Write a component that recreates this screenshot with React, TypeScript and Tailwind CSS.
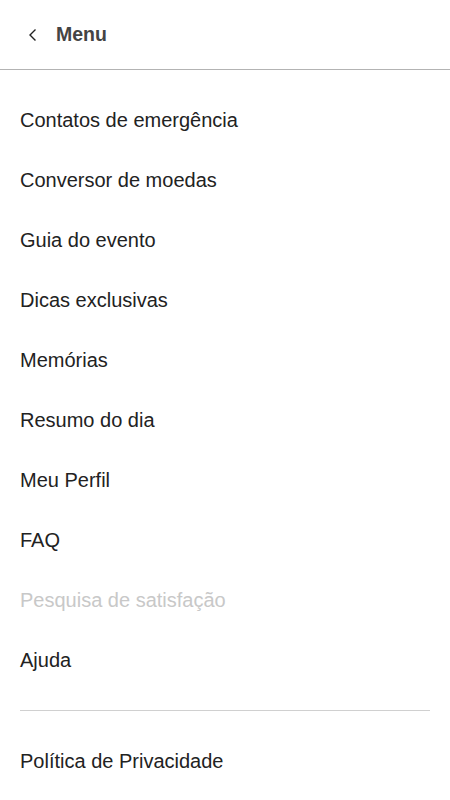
const items = [
  { label: "Contatos de emergência" },
  { label: "Conversor de moedas" },
  { label: "Guia do evento" },
  { label: "Dicas exclusivas" },
  { label: "Memórias" },
  { label: "Resumo do dia" },
  { label: "Meu Perfil" },
  { label: "FAQ" },
  { label: "Pesquisa de satisfação", disabled: true },
  { label: "Ajuda" },
];

function MenuItem({ label, disabled }: { label: string; disabled?: boolean }) {
  return (
    <div
      className={`flex h-[60px] items-center px-5 text-[20px] ${
        disabled ? "text-[#c8c8c8]" : "text-[#222222]"
      }`}
    >
      {label}
    </div>
  );
}

export default function App() {
  return (
    <div className="min-h-[800px] w-full bg-white font-['Liberation_Sans',Arial,sans-serif]">
      {/* Cabeçalho */}
      <div className="flex h-[70px] items-center gap-[18px] border-b border-[#b3b3b3] pl-[28px]">
        <svg width="10" height="14" viewBox="0 0 10 14" fill="none" aria-hidden="true">
          <path d="M7.5 1.5 L2 7 L7.5 12.5" stroke="#222" strokeWidth="1.4" />
        </svg>
        <h1 className="text-[19.5px] font-bold text-[#444444]">Menu</h1>
      </div>

      <nav className="flex flex-col pt-5">
        {items.map((item) => (
          <MenuItem key={item.label} label={item.label} disabled={item.disabled} />
        ))}
      </nav>

      <div className="mx-5 my-5 border-t border-[#d0d0d0]" />

      <MenuItem label="Política de Privacidade" />
    </div>
  );
}
